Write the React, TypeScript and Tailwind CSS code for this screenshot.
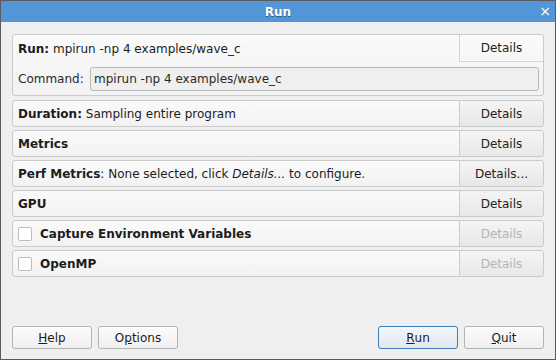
import React from "react";

const font = { fontFamily: '"DejaVu Sans", "Liberation Sans", sans-serif' };

function DetailsButton({ label = "Details", disabled = false }: { label?: string; disabled?: boolean }) {
  return (
    <div
      className={
        "flex h-full w-[84px] shrink-0 items-center justify-center rounded-r-[3px] border-l border-[#cdcdcd] bg-[linear-gradient(180deg,#f4f4f4,#e8e8e8)] text-[12px] " +
        (disabled ? "text-[#b4b4b4]" : "text-[#222]")
      }
    >
      {label}
    </div>
  );
}

function Panel({ children, details, disabled }: { children: React.ReactNode; details?: string; disabled?: boolean }) {
  return (
    <div className="flex h-[27px] items-stretch rounded-[3px] border border-[#cbcbcb] bg-[linear-gradient(180deg,#fafafa,#f2f2f2)]">
      <div className="flex flex-1 items-center pl-[5px] text-[12px] text-[#1c1c1c]">{children}</div>
      <DetailsButton label={details} disabled={disabled} />
    </div>
  );
}

function Check() {
  return <span className="mr-[8px] inline-block h-[14px] w-[14px] rounded-[2px] border border-[#bdbdbd] bg-white" />;
}

function FootButton({ children, primary }: { children: React.ReactNode; primary?: boolean }) {
  return (
    <div
      className={
        "flex h-[23px] w-[80px] items-center justify-center rounded-[3px] border text-[12px] text-[#1c1c1c] " +
        (primary
          ? "border-[#3b7cbc] bg-[linear-gradient(180deg,#f4f7fa,#e0e7ee)]"
          : "border-[#b5b5b5] bg-[linear-gradient(180deg,#fbfbfb,#f0f0f0)]")
      }
    >
      {children}
    </div>
  );
}

export default function App() {
  return (
    <div className="flex h-[360px] w-[556px] flex-col border border-[#5a5a5a] bg-[#efefef]" style={font}>
      <div className="relative flex h-[21px] shrink-0 items-center justify-center bg-[#5296d8]">
        <span className="text-[12px] font-bold text-white [text-shadow:0_1px_1px_rgba(0,0,0,0.45)]">Run</span>
        <span className="absolute right-[4px] top-[2px] text-[14px] leading-[16px] text-white">×</span>
      </div>

      <div className="flex flex-1 flex-col px-[11px] pt-[12px]">
        <div className="flex h-[62px] flex-col rounded-[3px] border border-[#cbcbcb] bg-[linear-gradient(180deg,#fafafa,#f2f2f2)]">
          <div className="flex h-[27px] items-stretch">
            <div className="flex flex-1 items-center pl-[5px] text-[12px] text-[#1c1c1c]">
              <b>Run:</b>&nbsp;mpirun -np 4 examples/wave_c
            </div>
            <div className="flex w-[84px] items-center justify-center rounded-tr-[3px] border-b border-l border-[#d4d4d4] text-[12px] text-[#222]">
              Details
            </div>
          </div>
          <div className="mt-[5px] flex items-center pl-[5px] pr-[4px]">
            <span className="w-[72px] text-[12px] text-[#2a2a2a]">Command:</span>
            <div className="flex h-[24px] flex-1 items-center rounded-[3px] border border-[#b9b9b9] bg-[#efefef] pl-[3px] text-[12px] text-[#2a2a2a]">
              mpirun -np 4 examples/wave_c
            </div>
          </div>
        </div>

        <div className="mt-[4px] flex flex-col gap-[3px]">
          <Panel>
            <b>Duration:</b>&nbsp;Sampling entire program
          </Panel>
          <Panel>
            <b>Metrics</b>
          </Panel>
          <Panel details="Details...">
            <b>Perf Metrics</b>: None selected, click&nbsp;<i>Details...</i>&nbsp;to configure.
          </Panel>
          <Panel>
            <b>GPU</b>
          </Panel>
          <Panel disabled>
            <Check />
            <b>Capture Environment Variables</b>
          </Panel>
          <Panel disabled>
            <Check />
            <b>OpenMP</b>
          </Panel>
        </div>

        <div className="mt-auto mb-[10px] flex items-center">
          <div className="flex gap-[6px]">
            <FootButton>
              <u>H</u>elp
            </FootButton>
            <FootButton>
              O<u>p</u>tions
            </FootButton>
          </div>
          <div className="ml-auto flex gap-[6px]">
            <FootButton primary>
              <u>R</u>un
            </FootButton>
            <FootButton>
              <u>Q</u>uit
            </FootButton>
          </div>
        </div>
      </div>
    </div>
  );
}
